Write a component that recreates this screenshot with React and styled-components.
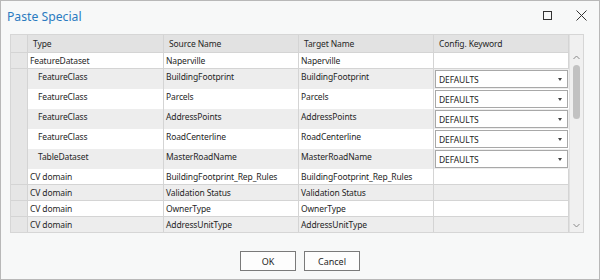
import React from 'react'
import styled, { createGlobalStyle } from 'styled-components'

const GlobalStyle = createGlobalStyle`
  body {
    margin: 0;
    font-family: "Noto Sans", "Open Sans", sans-serif;
  }
`

const Window = styled.div`
  box-sizing: border-box;
  width: 600px;
  height: 280px;
  border: 1px solid #b8b8b8;
  background: #f7f8f8;
  display: flex;
  flex-direction: column;
`

const TitleBar = styled.div`
  display: flex;
  align-items: center;
  height: 28px;
  padding: 0 0 0 6px;
`

const Title = styled.div`
  flex: 1;
  font-size: 12.2px;
  color: #2b7bc0;
  margin-top: 2px;
`

const Control = styled.div`
  width: 35px;
  height: 28px;
  display: flex;
  align-items: center;
  justify-content: center;
`

const Frame = styled.div`
  display: flex;
  margin: 5px 15px 0 9px;
  border: 1px solid #d6d6d6;
  height: 199px;
  box-sizing: border-box;
  overflow: hidden;
`

const Table = styled.div`
  flex: 1;
  display: flex;
  flex-direction: column;
`

const Row = styled.div`
  display: grid;
  grid-template-columns: 17px 136px 135px 135px 135px;
  height: ${p => p.h}px;
  flex-shrink: 0;
  background: ${p => (p.header ? '#e2e2e2' : p.alt ? '#ededed' : '#ffffff')};
`

const Cell = styled.div`
  box-sizing: border-box;
  border-right: 1px solid #d4d4d4;
  border-bottom: 1px solid #d4d4d4;
  padding-left: ${p => p.pad || 2}px;
  font-size: 8.5px;
  letter-spacing: -0.12px;
  line-height: ${p => p.lh || 16}px;
  color: #262626;
  white-space: nowrap;
  overflow: hidden;
`

const Selector = styled.div`
  box-sizing: border-box;
  background: #e6e6e6;
  border-right: 1px solid #d4d4d4;
  border-bottom: 1px solid #d4d4d4;
`

const ComboCell = styled.div`
  box-sizing: border-box;
  border-bottom: 1px solid #d4d4d4;
  padding: 1px;
  display: flex;
`

const Combo = styled.div`
  flex: 1;
  box-sizing: border-box;
  height: 18px;
  background: #fff;
  border: 1px solid #a8a8a8;
  display: flex;
  align-items: center;
  padding: 0 5px 0 3px;
  font-size: 8.5px;
  letter-spacing: -0.12px;
  color: #1e1e1e;
`

const ComboText = styled.span`
  flex: 1;
`

const Caret = styled.span`
  width: 0;
  height: 0;
  border-left: 2.5px solid transparent;
  border-right: 2.5px solid transparent;
  border-top: 3px solid #444;
`

const ScrollBar = styled.div`
  width: 15px;
  background: #f0f0f0;
  border-left: 1px solid #e0e0e0;
  display: flex;
  flex-direction: column;
  align-items: center;
  padding-top: 20px;
  box-sizing: border-box;
`

const Thumb = styled.div`
  width: 7px;
  height: 54px;
  margin-top: 5px;
  border-radius: 4px;
  background: #c2c2c2;
`

const Spacer = styled.div`
  flex: 1;
`

const Footer = styled.div`
  display: flex;
  justify-content: center;
  gap: 8px;
  margin-top: 18px;
`

const Button = styled.button`
  width: 56px;
  height: 20px;
  box-sizing: border-box;
  border: 1px solid #7a7a7a;
  background: #fdfdfd;
  font-family: inherit;
  font-size: 9px;
  color: #262626;
  padding: 0;
`

const rows = [
  { type: 'FeatureDataset', src: 'Naperville', tgt: 'Naperville', h: 16 },
  { type: 'FeatureClass', src: 'BuildingFootprint', tgt: 'BuildingFootprint', sub: true, combo: true, h: 20 },
  { type: 'FeatureClass', src: 'Parcels', tgt: 'Parcels', sub: true, combo: true, h: 20 },
  { type: 'FeatureClass', src: 'AddressPoints', tgt: 'AddressPoints', sub: true, combo: true, h: 20 },
  { type: 'FeatureClass', src: 'RoadCenterline', tgt: 'RoadCenterline', sub: true, combo: true, h: 20 },
  { type: 'TableDataset', src: 'MasterRoadName', tgt: 'MasterRoadName', sub: true, combo: true, h: 20 },
  { type: 'CV domain', src: 'BuildingFootprint_Rep_Rules', tgt: 'BuildingFootprint_Rep_Rules', h: 16 },
  { type: 'CV domain', src: 'Validation Status', tgt: 'Validation Status', h: 16 },
  { type: 'CV domain', src: 'OwnerType', tgt: 'OwnerType', h: 16 },
  { type: 'CV domain', src: 'AddressUnitType', tgt: 'AddressUnitType', h: 16 },
]

function Chevron({ up }) {
  return (
    <svg width="7" height="5" viewBox="0 0 7 5">
      <path d={up ? 'M0.5 4 L3.5 1 L6.5 4' : 'M0.5 1 L3.5 4 L6.5 1'} fill="none" stroke="#8a8a8a" strokeWidth="1" />
    </svg>
  )
}

export default function App() {
  return (
    <>
      <GlobalStyle />
      <Window>
        <TitleBar>
          <Title>Paste Special</Title>
          <Control>
            <svg width="10" height="10" viewBox="0 0 10 10">
              <rect x="1.5" y="1.5" width="8" height="8" fill="none" stroke="#333" strokeWidth="1" />
            </svg>
          </Control>
          <Control>
            <svg width="11" height="11" viewBox="0 0 11 11">
              <path d="M0.5 0.5 L10.5 10.5 M10.5 0.5 L0.5 10.5" stroke="#333" strokeWidth="1" />
            </svg>
          </Control>
        </TitleBar>
        <Frame>
          <Table>
            <Row header h={18}>
              <Selector />
              <Cell pad={5} lh={17}>Type</Cell>
              <Cell pad={5} lh={17}>Source Name</Cell>
              <Cell pad={5} lh={17}>Target Name</Cell>
              <Cell pad={5} lh={17}>Config. Keyword</Cell>
            </Row>
            {rows.map((r, i) => (
              <Row key={i} h={r.h} alt={i % 2 === 1}>
                <Selector />
                <Cell pad={r.sub ? 10 : 2}>{r.type}</Cell>
                <Cell>{r.src}</Cell>
                <Cell>{r.tgt}</Cell>
                {r.combo ? (
                  <ComboCell>
                    <Combo>
                      <ComboText>DEFAULTS</ComboText>
                      <Caret />
                    </Combo>
                  </ComboCell>
                ) : (
                  <Cell />
                )}
              </Row>
            ))}
          </Table>
          <ScrollBar>
            <Chevron up />
            <Thumb />
            <Spacer />
            <Chevron />
            <div style={{ height: 4 }} />
          </ScrollBar>
        </Frame>
        <Footer>
          <Button>OK</Button>
          <Button>Cancel</Button>
        </Footer>
      </Window>
    </>
  )
}
